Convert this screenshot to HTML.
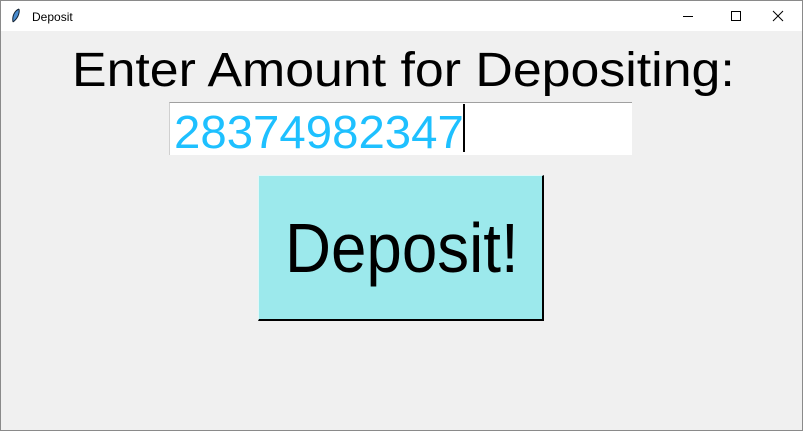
<!DOCTYPE html>
<html><head><style>
body{margin:0;width:803px;height:431px;overflow:hidden;background:#f0f0f0;font-family:"Liberation Sans",sans-serif;position:relative}
.frame{position:absolute;left:0;top:0;width:801px;height:429px;border:1px solid #8a8a8a}
.tb{position:absolute;left:1px;top:1px;width:801px;height:30px;background:#fff}
.tt{position:absolute;left:31px;top:9px;font-size:12px;color:#000}
.t{position:absolute;white-space:nowrap;transform-origin:0 0}
</style></head><body>
<div class="frame"></div>
<div class="tb">
<svg style="position:absolute;left:10px;top:7px" width="10" height="16" viewBox="0 0 10 16"><path d="M8 1 C3 3 1 9 2 14 M8 1 C9 6 6 11 2 14" stroke="#123" fill="#4a8ccf" stroke-width="1"/></svg>
<div class="tt">Deposit</div>
<svg style="position:absolute;left:680px;top:8px" width="110" height="14"><path d="M2 7.5h10" stroke="#000"/><path d="M50.5 2.5h9v9h-9z" stroke="#000" fill="none"/><path d="M92 2l10 10M102 2l-10 10" stroke="#000"/></svg>
</div>
<div class="t" style="left:72px;top:43px;font-size:48px;transform:scaleX(1.08)">Enter Amount for Depositing:</div>
<div style="position:absolute;left:169px;top:102px;width:463px;height:53px;background:#fff;border-top:1px solid #a0a0a0;border-left:1px solid #d0d0d0;box-sizing:border-box"></div>
<div class="t" style="left:174px;top:105px;font-size:46px;color:#1ec0ff;transform:scaleX(1.03)">28374982347</div>
<div style="position:absolute;left:463px;top:104px;width:2px;height:48px;background:#000"></div>
<div style="position:absolute;left:258px;top:175px;width:286px;height:146px;background:#9ce9ec;border-right:2px solid #000;border-bottom:2px solid #000;border-top:1px solid #e0f8f8;border-left:1px solid #e0f8f8;box-sizing:border-box"></div>
<div class="t" style="left:285px;top:208px;font-size:70px;transform:scaleX(0.91)">Deposit!</div>
</body></html>
